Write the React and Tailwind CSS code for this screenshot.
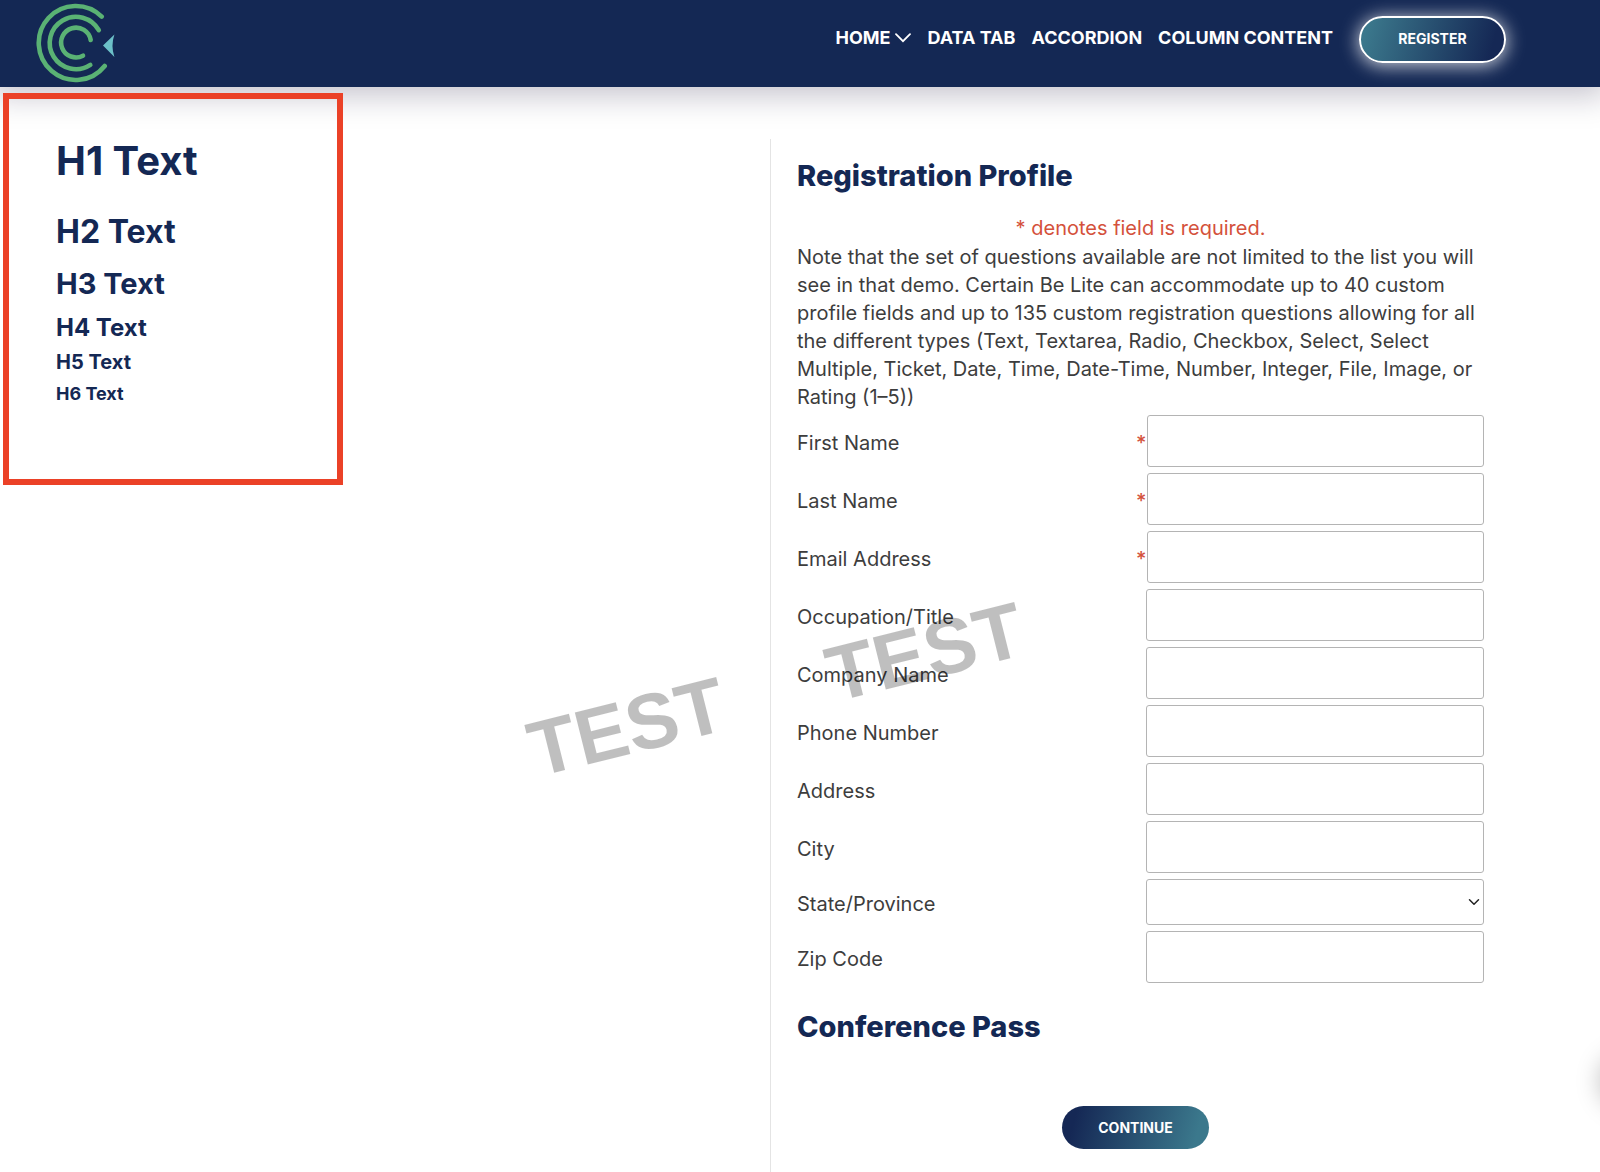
import React, { useState } from 'react';
import { ChevronDown } from 'lucide-react';

const navLinks = [
  { label: 'HOME', hasMenu: true },
  { label: 'DATA TAB' },
  { label: 'ACCORDION' },
  { label: 'COLUMN CONTENT' }
];

const fields = [
  { id: 'firstName', label: 'First Name', required: true },
  { id: 'lastName', label: 'Last Name', required: true },
  { id: 'email', label: 'Email Address', required: true },
  { id: 'occupation', label: 'Occupation/Title' },
  { id: 'company', label: 'Company Name' },
  { id: 'phone', label: 'Phone Number' },
  { id: 'address', label: 'Address' },
  { id: 'city', label: 'City' },
  { id: 'state', label: 'State/Province', type: 'select' },
  { id: 'zip', label: 'Zip Code' }
];

const Logo = () => (
  <svg viewBox="36 3 80 80" className="h-20 w-20" fill="none" aria-hidden="true">
    <g stroke="#5ab274" strokeWidth="4.6" strokeLinecap="round">
      <path d="M101.7 16.6A37 37 0 1 0 104.7 66" />
      <path d="M98.8 30.2A26.2 26.2 0 1 0 90.3 64.9" />
      <path d="M90.7 40A14.9 14.9 0 1 0 83 55.7" />
    </g>
    <path d="M103 45.5L114.4 34.6Q110.6 46 114.4 57Z" fill="#6cc0c8" />
  </svg>
);

const MenuArrow = () => (
  <svg viewBox="0 0 16 10" className="h-2.5 w-4" fill="none" aria-hidden="true">
    <path d="M1 1.2L8 8.2L15 1.2" stroke="currentColor" strokeWidth="1.8" strokeLinecap="round" />
  </svg>
);

const Header = () => (
  <header className="relative flex h-[87px] items-center justify-between bg-[#142854] pr-[94px] pl-9 shadow-[0_0_30px_8px_rgba(20,10,50,0.25)]">
    <a href="#home" aria-label="Certain" className="pb-0.5">
      <Logo />
    </a>
    <div className="flex items-start gap-[26px] pb-2">
      <nav className="flex gap-4 pt-2 text-[18px] leading-7 font-bold text-white">
        {navLinks.map((link) => (
          <a key={link.label} href="#nav" className="flex items-center gap-[5px]">
            {link.label}
            {link.hasMenu && <MenuArrow />}
          </a>
        ))}
      </nav>
      <button className="h-[47px] w-[147px] rounded-full border-2 border-white bg-[linear-gradient(105deg,#3b788c_5%,#152855_90%)] pb-0.5 text-sm font-bold text-white shadow-[0_2px_18px_1px_rgba(255,255,255,0.75)]">
        REGISTER
      </button>
    </div>
  </header>
);

const HeadingSamples = () => (
  <div className="mt-1.5 ml-[3px] h-[392px] w-[340px] border-6 border-[#eb4127] pt-[38px] pl-[47px] font-bold text-[#142854]">
    <h1 className="text-[40px] leading-12">H1 Text</h1>
    <h2 className="mt-[27px] text-[32px] leading-10">H2 Text</h2>
    <h3 className="mt-3.5 text-[29px] leading-9">H3 Text</h3>
    <h4 className="mt-2.5 text-2xl leading-8">H4 Text</h4>
    <h5 className="mt-1 text-xl leading-7">H5 Text</h5>
    <h6 className="mt-1 text-[18px] leading-7">H6 Text</h6>
  </div>
);

const FieldRow = ({ field, value, onChange }) => {
  const controlClass = 'min-w-0 flex-1 rounded-[3px] border border-[#b4b4b4] bg-white px-2 text-xl text-[#3d3d3d]';

  return (
    <div className="flex items-center">
      <label htmlFor={field.id} className="flex-1 pt-1 leading-7">{field.label}</label>
      <div className={`flex w-[348px] items-center ${field.required ? 'gap-0.5' : 'pl-2.5'}`}>
        {field.required && <span className="w-[9px] pt-1 leading-7 font-medium text-[#d4513b]">*</span>}
        {field.type === 'select' ? (
          <div className="relative flex flex-1">
            <select
              id={field.id}
              value={value}
              onChange={onChange}
              className={`${controlClass} h-[46px] appearance-none`}
            >
              <option value=""></option>
            </select>
            <ChevronDown size={18} strokeWidth={2} className="pointer-events-none absolute top-3.5 right-px text-[#222]" />
          </div>
        ) : (
          <input
            id={field.id}
            type="text"
            required={field.required}
            value={value}
            onChange={onChange}
            className={`${controlClass} h-[52px]`}
          />
        )}
      </div>
    </div>
  );
};

const App = () => {
  const [values, setValues] = useState({});

  const handleChange = (id) => (e) => {
    setValues({ ...values, [id]: e.target.value });
  };

  return (
    <div className="relative overflow-hidden bg-white font-[Inter,sans-serif]">
      <Header />

      <main className="relative grid grid-cols-[770fr_830fr]">
        <HeadingSamples />

        {/* Registration form */}
        <form
          onSubmit={(e) => e.preventDefault()}
          className="mt-[52px] border-l border-[#e4e4e4] pt-[19px] pr-[116px] pb-[23px] pl-[26px] text-xl text-[#3d3d3d]"
        >
          <h2 className="text-[29px] leading-9 font-extrabold text-[#142854]">Registration Profile</h2>
          <p className="mt-5 text-center leading-7 text-[#d4513b]">* denotes field is required.</p>
          <p className="mt-px leading-7">
            Note that the set of questions available are not limited to the list you will see in that
            demo. Certain Be Lite can accommodate up to 40 custom profile fields and up to 135 custom
            registration questions allowing for all the different types (Text, Textarea, Radio,
            Checkbox, Select, Select Multiple, Ticket, Date, Time, Date-Time, Number, Integer, File,
            Image, or Rating (1–5))
          </p>

          <div className="mt-1 flex flex-col gap-1.5">
            {fields.map((field) => (
              <FieldRow
                key={field.id}
                field={field}
                value={values[field.id] || ''}
                onChange={handleChange(field.id)}
              />
            ))}
          </div>

          <h2 className="mt-[26px] text-[29px] leading-9 font-extrabold text-[#142854]">Conference Pass</h2>
          <div className="mt-[61px] flex justify-center pr-2.5">
            <button
              type="submit"
              className="h-[43px] w-[147px] rounded-full bg-[linear-gradient(105deg,#152855_10%,#3b788c_90%)] text-sm font-bold text-white"
            >
              CONTINUE
            </button>
          </div>
        </form>
      </main>

      {/* Test mode watermarks */}
      <div className="pointer-events-none absolute top-[688px] left-[527px] -rotate-14 font-['Liberation_Sans',sans-serif] text-[78px] leading-none font-bold text-black/25">
        TEST
      </div>
      <div className="pointer-events-none absolute top-[613px] left-[825px] -rotate-14 font-['Liberation_Sans',sans-serif] text-[78px] leading-none font-bold text-black/25">
        TEST
      </div>

      {/* Off-canvas help bubble, only its shadow reaches the page */}
      <div className="absolute top-[1053px] left-full h-14 w-14 rounded-full shadow-[0_0_24px_rgba(0,0,0,0.25)]"></div>
    </div>
  );
};

export default App;
